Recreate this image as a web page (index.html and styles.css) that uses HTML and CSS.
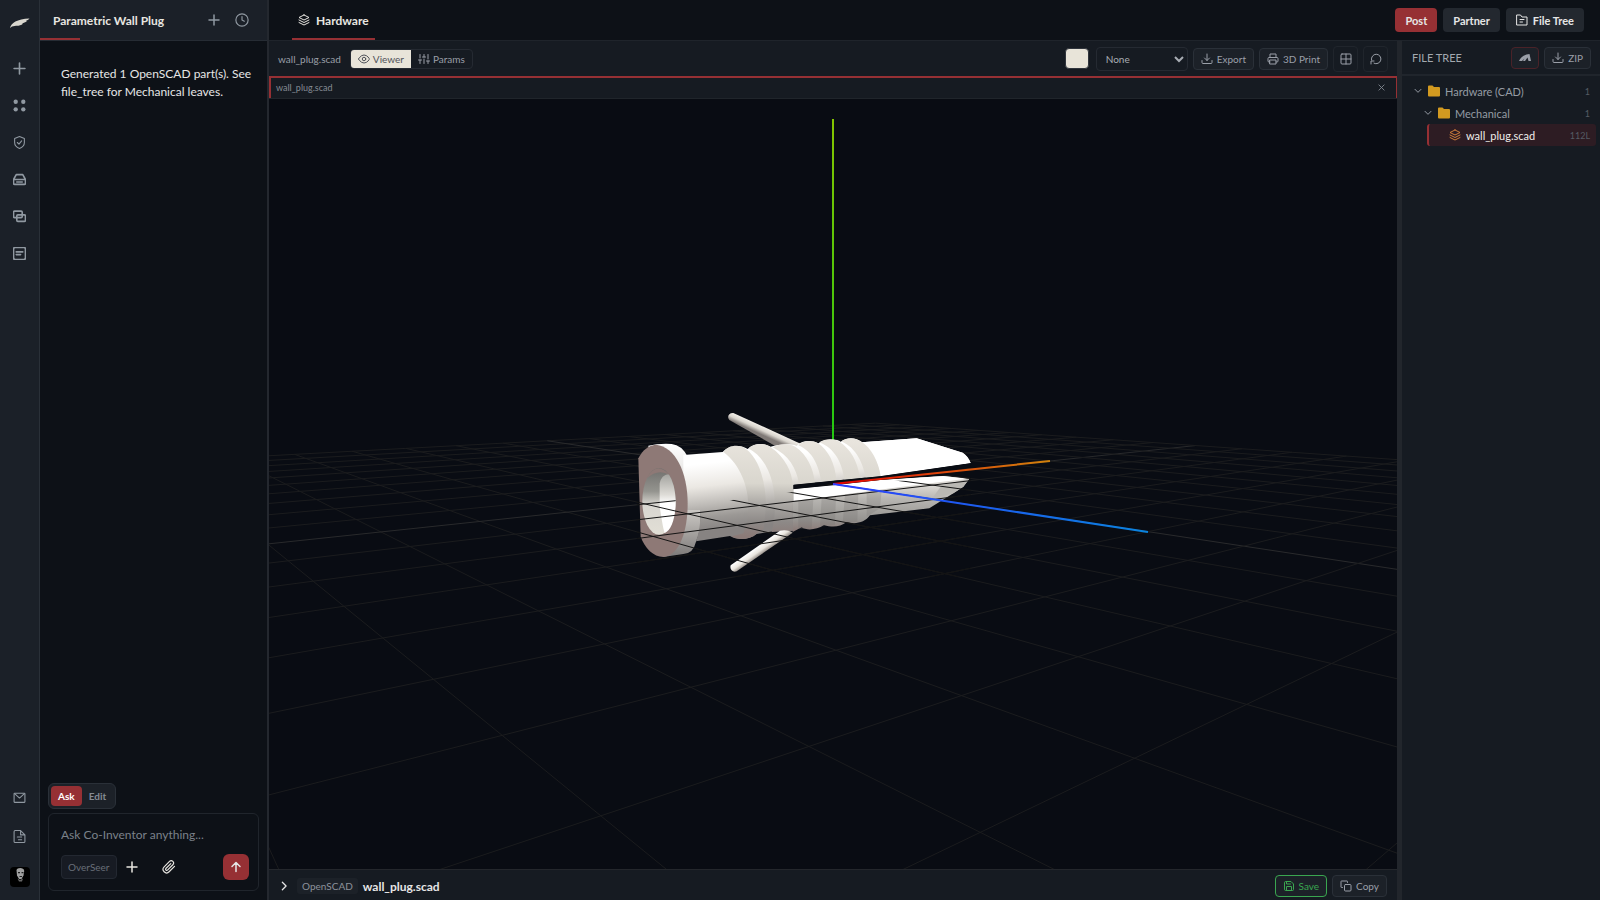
FILE: index.html
```html
<!DOCTYPE html>
<html lang="en">
<head>
    <meta charset="UTF-8">
    <meta name="viewport" content="width=device-width, initial-scale=1.0">
    <title>Parametric Wall Plug</title>
    <link rel="stylesheet" href="styles.css">
</head>
<body>
    <svg class="defs" width="0" height="0" aria-hidden="true">
        <symbol id="i-plus" viewBox="0 0 24 24"><path d="M12 2v20M2 12h20"/></symbol>
        <symbol id="i-layers" viewBox="0 0 24 24"><path d="M12 2 2 7l10 5 10-5-10-5z"/><path d="m2 12 10 5 10-5"/><path d="m2 17 10 5 10-5"/></symbol>
        <symbol id="i-download" viewBox="0 0 24 24"><path d="M22 15v4a2 2 0 0 1-2 2H4a2 2 0 0 1-2-2v-4M7 10l5 5 5-5M12 15V2"/></symbol>
        <symbol id="i-chevron" viewBox="0 0 24 24"><path d="m3 7 9 9 9-9"/></symbol>
        <symbol id="i-folder" viewBox="0 0 24 24"><path fill="currentColor" stroke="none" d="M2 1h7l3 3h10a2 2 0 0 1 2 2v15a2 2 0 0 1-2 2H2a2 2 0 0 1-2-2V3a2 2 0 0 1 2-2z"/></symbol>
    </svg>

    <div class="app">
        <nav class="rail" aria-label="Main">
            <a href="#" class="logo" aria-label="Home">
                <svg viewBox="0 0 20 10"><path d="M0 10C1 5 7 1 19.500 0.500C18.500 1.800 17.500 2.300 16 2.700L17 3C15 4.500 14 5 12 5.300L13 5.800C11 7.300 8.500 8 6 7.800L2 8.500z"/></svg>
            </a>
            <button class="rail-btn" aria-label="New"><svg class="icon"><use href="#i-plus"/></svg></button>
            <button class="rail-btn" aria-label="Apps"><svg class="icon" viewBox="0 0 24 24"><g fill="currentColor" stroke="none"><circle cx="5" cy="5" r="4"/><circle cx="19" cy="5" r="4"/><circle cx="5" cy="19" r="4"/><circle cx="19" cy="19" r="4"/></g></svg></button>
            <button class="rail-btn" aria-label="Security"><svg class="icon thin" viewBox="0 0 24 24"><path d="M12 1 3 4.500V12c0 5.500 4 9 9 11 5-2 9-5.500 9-11V4.500z"/><path d="m8 12 3 3 5-6"/></svg></button>
            <button class="rail-btn" aria-label="Storage"><svg class="icon" viewBox="0 0 24 24"><path d="M1 12 6 3h12l5 9v7a2 2 0 0 1-2 2H3a2 2 0 0 1-2-2zM1 12h22M7 16.500h10"/></svg></button>
            <button class="rail-btn" aria-label="Chats"><svg class="icon" viewBox="0 0 24 24"><rect x="1" y="2" width="16" height="12" rx="2"/><rect x="7" y="9" width="16" height="12" rx="2"/></svg></button>
            <button class="rail-btn" aria-label="Notes"><svg class="icon" viewBox="0 0 24 24"><rect x="1" y="1" width="22" height="22" rx="3"/><path d="M6 9h12M6 14h8"/></svg></button>
            <div class="spacer"></div>
            <div class="rail-bottom">
                <button class="rail-btn" aria-label="Mail"><svg class="icon thin" viewBox="0 0 24 24"><rect x="2" y="4" width="20" height="17" rx="1"/><path d="m3 5 9 8 9-8"/></svg></button>
                <button class="rail-btn" aria-label="Docs"><svg class="icon thin" viewBox="0 0 24 24"><path d="M14 1H4a2 2 0 0 0-2 2v18a2 2 0 0 0 2 2h16a2 2 0 0 0 2-2V9zM14 1v8h8M8 13h8M10 18h6"/></svg></button>
            </div>
            <button class="avatar" aria-label="Account">
                <svg viewBox="0 0 20 20"><path fill="#a0a0a0" d="M6.500 3C7 .5 14 0 14.200 4L13.500 8.500 11.500 12H9L7 8.500z"/><path fill="#222" d="M8 5h2v1.300H8zM11.500 5h2v1.300h-2zM9.500 9h2.500v1H9.500z"/><path fill="#666" d="m7.500 11.500 2.500 1.500 3-1.500-1 3H9z"/></svg>
            </button>
        </nav>

        <aside class="chat">
            <header class="chat-head">
                <h1 class="chat-title">Parametric Wall Plug</h1>
                <button class="ghost" aria-label="New chat"><svg class="icon small"><use href="#i-plus"/></svg></button>
                <button class="ghost" aria-label="History"><svg class="icon" viewBox="0 0 24 24"><circle cx="12" cy="12" r="10.500"/><path d="M12 6v6l4 2"/></svg></button>
            </header>
            <div class="messages">
                <p>Generated 1 OpenSCAD part(s). See file_tree for Mechanical leaves.</p>
            </div>
            <div class="composer-area">
                <div class="mode">
                    <button class="mode-btn active">Ask</button>
                    <button class="mode-btn">Edit</button>
                </div>
                <form class="composer">
                    <input type="text" aria-label="Message" placeholder="Ask Co-Inventor anything...">
                    <div class="composer-row">
                        <button type="button" class="overseer">OverSeer</button>
                        <button type="button" class="tool" aria-label="Add"><svg class="icon small"><use href="#i-plus"/></svg></button>
                        <button type="button" class="tool" aria-label="Attach"><svg class="icon thin" viewBox="0 0 24 24"><path d="m21.400 11-9.200 9.200a6 6 0 0 1-8.500-8.500l9.200-9.200a4 4 0 0 1 5.700 5.700l-9.200 9.200a2 2 0 0 1-2.800-2.800l8.500-8.500"/></svg></button>
                        <button type="button" class="send" aria-label="Send"><svg class="icon small" viewBox="0 0 24 24"><path d="M12 21V4M4 11l8-8 8 8"/></svg></button>
                    </div>
                </form>
            </div>
        </aside>

        <div class="main">
            <header class="topbar">
                <a href="#" class="tab"><svg class="icon small thin"><use href="#i-layers"/></svg>Hardware</a>
                <div class="spacer"></div>
                <button class="top-btn primary">Post</button>
                <button class="top-btn">Partner</button>
                <button class="top-btn"><svg class="icon small thin" viewBox="0 0 24 24"><path d="M2 2h7l3 4h10v16H2zM8 11h8M8 16h5"/></svg>File Tree</button>
            </header>

            <div class="body">
                <main class="workspace">
                    <div class="toolbar">
                        <span class="file">wall_plug.scad</span>
                        <div class="switch">
                            <button class="switch-btn on"><svg class="icon small" viewBox="0 0 24 24"><path d="M1 12s4-8 11-8 11 8 11 8-4 8-11 8S1 12 1 12z"/><circle cx="12" cy="12" r="3.500"/></svg>Viewer</button>
                            <button class="switch-btn"><svg class="icon small" viewBox="0 0 24 24"><path d="M4 21v-7M4 10V3M12 21v-9M12 8V3M20 21v-5M20 12V3M1 14h6M9 8h6M17 16h6"/></svg>Params</button>
                        </div>
                        <div class="spacer"></div>
                        <button class="swatch" aria-label="Model colour"></button>
                        <select class="material" aria-label="Material">
                            <option>None</option>
                        </select>
                        <button class="btn"><svg class="icon"><use href="#i-download"/></svg>Export</button>
                        <button class="btn"><svg class="icon" viewBox="0 0 24 24"><path d="M6 9V2h12v7M6 18H4a2 2 0 0 1-2-2v-5a2 2 0 0 1 2-2h16a2 2 0 0 1 2 2v5a2 2 0 0 1-2 2h-2"/><rect x="6" y="14" width="12" height="8"/></svg>3D Print</button>
                        <button class="sq" aria-label="Grid"><svg class="icon" viewBox="0 0 24 24"><rect x="2" y="2" width="20" height="20" rx="2"/><path d="M12 2v20M2 12h20"/></svg></button>
                        <button class="sq" aria-label="Reset view"><svg class="icon" viewBox="0 0 24 24"><path d="M3 14a9.500 9.500 0 1 1 5 6.500M2 22v-6h6"/></svg></button>
                    </div>
                    <div class="pane-head">
                        <span>wall_plug.scad</span>
                        <button class="close" aria-label="Close"><svg class="icon" viewBox="0 0 24 24"><path d="m3 3 18 18M21 3 3 21"/></svg></button>
                    </div>
                    <div class="viewport">
                        <svg class="scene" viewBox="-564 -385 1128 770" preserveAspectRatio="xMidYMid slice" role="img" aria-label="Wall plug model">
                            <defs>
                                <linearGradient id="ax" gradientUnits="userSpaceOnUse" x1="0" y1="0" x2="217" y2="0"><stop stop-color="#e60000"/><stop offset=".4" stop-color="#e03a0a"/><stop offset="1" stop-color="#d0820c"/></linearGradient>
                                <linearGradient id="ay" gradientUnits="userSpaceOnUse" x1="0" y1="0" x2="0" y2="-365"><stop stop-color="#14c814"/><stop offset="1" stop-color="#84c400"/></linearGradient>
                                <linearGradient id="az" gradientUnits="userSpaceOnUse" x1="0" y1="0" x2="315" y2="0"><stop stop-color="#2b3cff"/><stop offset="1" stop-color="#0a84de"/></linearGradient>
                                <linearGradient id="shade" gradientUnits="userSpaceOnUse" x1="0" y1="150" x2="30" y2="420"><stop stop-color="#fff"/><stop offset=".25" stop-color="#fff"/><stop offset=".5" stop-color="#ebe8e3"/><stop offset=".7" stop-color="#bfbcb8"/><stop offset=".85" stop-color="#9b9895"/><stop offset="1" stop-color="#878382"/></linearGradient>
                                <linearGradient id="rib" gradientUnits="userSpaceOnUse" x1="0" y1="120" x2="0" y2="410"><stop stop-color="#e9e5de"/><stop offset=".45" stop-color="#d9d6ce"/><stop offset=".65" stop-color="#aeaba7"/><stop offset=".85" stop-color="#8d8987"/><stop offset="1" stop-color="#8b7a77"/></linearGradient>
                                <linearGradient id="lower" gradientUnits="userSpaceOnUse" x1="0" y1="255" x2="0" y2="392"><stop stop-color="#dddad5"/><stop offset=".3" stop-color="#b8b6b2"/><stop offset=".75" stop-color="#979592"/><stop offset="1" stop-color="#8b7b78"/></linearGradient>
                                <linearGradient id="side" gradientUnits="userSpaceOnUse" x1="0" y1="132" x2="0" y2="470"><stop stop-color="#fff"/><stop offset=".6" stop-color="#c9c6c2"/><stop offset="1" stop-color="#7d7a79"/></linearGradient>
                                <linearGradient id="bore" x1="0" y1="0" x2="0" y2="1"><stop stop-color="#6f6e6c"/><stop offset=".35" stop-color="#94948f"/><stop offset=".55" stop-color="#d8d6d0"/><stop offset="1" stop-color="#e2dfd6"/></linearGradient>
                                <linearGradient id="bore-right" x1="0" y1="0" x2="0" y2="1"><stop stop-color="#a3a39f"/><stop offset=".35" stop-color="#dedcd7"/><stop offset=".5" stop-color="#fff"/><stop offset="1" stop-color="#fff"/></linearGradient>
                                <linearGradient id="wing-top" gradientUnits="userSpaceOnUse" x1="435" y1="82" x2="425" y2="104"><stop stop-color="#f3f0ea"/><stop offset=".5" stop-color="#d9d5ce"/><stop offset="1" stop-color="#807a77"/></linearGradient>
                                <linearGradient id="wing-low" gradientUnits="userSpaceOnUse" x1="412" y1="440" x2="426" y2="460"><stop stop-color="#fff"/><stop offset=".6" stop-color="#e9e5de"/><stop offset="1" stop-color="#a39c96"/></linearGradient>
                                <clipPath id="front"><path transform="translate(-213 -84) scale(.33333)" d="M50 303 167 294V330L205 338 340 299 520 276 690 236 760 246 1052 232V530H50z"/></clipPath>
                            </defs>
                            <g id="grid"></g>
                            <rect x="-1" y="-365" width="2" height="365" fill="url(#ay)"/>
                            <g transform="translate(-213 -84) scale(.33333)">
                                <path fill="url(#wing-top)" d="M340 39 548 134 560 150 470 140 328 60C320 50 326 38 340 39z"/>
                                <!-- flange side -->
                                <path fill="url(#side)" d="M85 137Q115 130 155 132 185 135 203 170L238 300Q250 380 228 425 220 460 190 462L130 471z"/>
                                <!-- upper half -->
                                <path fill="url(#shade)" d="M190 165 308 156C325 136 360 132 383 147 400 130 430 128 452 140 475 132 510 130 530 137 548 120 575 120 595 130 610 117 650 115 662 125 680 112 705 110 725 127L890 115 1028 158Q1044 168 1052 189L780 229 640 242 520 255V392L470 392 410 402C390 420 350 422 330 408L228 424Q244 380 240 330H190z"/>
                                <path fill="#fff" d="M725 127 890 115 1028 158Q1044 168 1052 189L780 229Q775 170 725 127z"/>
                                <!-- lower half -->
                                <path fill="url(#lower)" d="M518 268 780 240 970 228 1048 236 1030 260 1000 280 928 325 750 346C735 368 705 374 680 366 660 380 640 384 612 375 590 390 560 392 545 382L518 396z"/>
                                <path fill="#fff" d="M521 268 780 240 970 228 1040 236 835 262 600 293 521 302z"/>
                                <path fill="#bab8b3" d="M1048 236 965 256 935 298 1000 280 1030 260z"/>
                                <g fill="url(#rib)">
                                    <path d="M310 156C325 134 360 132 378 147 415 175 435 235 438 310L432 385 408 402C390 420 352 422 335 409L370 400C400 330 388 215 310 156z"/>
                                    <path d="M385 145C405 128 435 128 452 142 495 170 518 220 518 255V392L455 396C475 320 470 190 385 145z"/>
                                    <path d="M458 142C480 130 505 130 526 140 562 165 580 205 585 248L537 252C530 205 505 165 458 142z"/>
                                    <path d="M535 136C550 120 575 120 594 130 625 150 645 190 649 240L604 246C597 200 580 155 535 136z"/>
                                    <path d="M598 127C615 116 640 115 658 125 690 145 715 185 719 234L673 239C667 190 645 145 598 127z"/>
                                    <path d="M664 124C680 112 705 112 723 124 755 145 775 185 782 228L737 233C729 190 710 145 664 124z"/>
                                </g>
                                <g fill="#6f6c6a" opacity=".22">
                                    <path d="M535 302 580 296 575 386 535 388z"/>
                                    <path d="M605 293 648 287 645 374 600 380z"/>
                                    <path d="M675 283 715 278 712 365 668 370z"/>
                                    <path d="M740 275 785 270 780 325 740 350z"/>
                                </g>
                                <path fill="#090c13" d="M521 254 640 242 780 229 1052 190 1052 200 970 226 780 240 640 256 521 267z"/>
                                <path fill="url(#wing-low)" d="M480 392C495 388 512 392 518 398L350 514C338 519 328 508 332 496z"/>
                                <!-- flange face -->
                                <path fill="#8e7976" d="M55 175C68 150 85 136 108 134 165 140 203 215 203 310 203 400 175 468 130 471 100 470 75 445 62 410z"/>
                                <ellipse fill="url(#bore)" cx="117" cy="304" rx="50" ry="100"/>
                                <path fill="url(#bore-right)" d="M119 320V250Q124 225 146 222 165 250 167 304C167 350 155 392 134 399 128 380 124 350 119 320z"/>
                                <path fill="#8e7976" d="M80 235Q110 180 148 225 115 205 80 235z"/>
                            </g>
                            <g id="grid-front" clip-path="url(#front)"></g>
                            <path class="axis" stroke="url(#ax)" d="M0 0 217-23"/>
                            <path class="axis" stroke="url(#az)" d="M0 0 315 48"/>
                        </svg>
                    </div>
                    <footer class="codebar">
                        <button class="expand" aria-label="Expand"><svg class="icon" viewBox="0 0 24 24"><path d="m8 3 9 9-9 9"/></svg></button>
                        <span class="lang">OpenSCAD</span>
                        <strong class="name">wall_plug.scad</strong>
                        <div class="spacer"></div>
                        <button class="btn save"><svg class="icon" viewBox="0 0 24 24"><path d="M3 5a2 2 0 0 1 2-2h11l5 5v11a2 2 0 0 1-2 2H5a2 2 0 0 1-2-2zM7 3v5h8M7 21v-8h10v8"/></svg>Save</button>
                        <button class="btn"><svg class="icon" viewBox="0 0 24 24"><rect x="9" y="9" width="13" height="13" rx="2"/><path d="M5 15H3a1 1 0 0 1-1-1V3a1 1 0 0 1 1-1h11a1 1 0 0 1 1 1v2"/></svg>Copy</button>
                    </footer>
                </main>

                <aside class="files">
                    <header class="files-head">
                        <h2>FILE TREE</h2>
                        <button class="btn brand" aria-label="Sync"><svg class="icon" viewBox="0 0 24 24"><path fill="currentColor" stroke="none" d="M0 18C3 10 10 5 21 4l3 14h-5l-2-7-5 7H8l3-5-5 5z"/></svg></button>
                        <button class="btn"><svg class="icon"><use href="#i-download"/></svg>ZIP</button>
                    </header>
                    <ul class="tree">
                        <li class="node"><svg class="icon chev"><use href="#i-chevron"/></svg><svg class="icon folder"><use href="#i-folder"/></svg><span>Hardware (CAD)</span><small>1</small></li>
                        <li class="node level-1"><svg class="icon chev"><use href="#i-chevron"/></svg><svg class="icon folder"><use href="#i-folder"/></svg><span>Mechanical</span><small>1</small></li>
                        <li class="node leaf"><svg class="icon scad"><use href="#i-layers"/></svg><span>wall_plug.scad</span><small>112L</small></li>
                    </ul>
                </aside>
            </div>
        </div>
    </div>
    <script src="grid.js"></script>
</body>
</html>
```
FILE: styles.css
```css
* {
    box-sizing: border-box;
}
body {
    margin: 0;
    background: #0d1117;
    color: #e6e6e6;
    font-family: Lato, "Noto Sans", sans-serif;
    font-size: 12px;
}
button, input, select {
    font: inherit;
    color: inherit;
    background: none;
    border: 0;
    padding: 0;
}
button {
    display: flex;
    align-items: center;
    justify-content: center;
    cursor: pointer;
}
h1, h2, p, ul {
    margin: 0;
    padding: 0;
}
.defs {
    position: absolute;
}
.icon {
    width: 14px;
    height: 14px;
    flex: none;
    fill: none;
    stroke: currentColor;
    stroke-width: 3;
    stroke-linecap: round;
    stroke-linejoin: round;
}
.icon.small {
    width: 12px;
    height: 12px;
}
.icon.thin, .switch .icon, .btn .icon, .sq .icon {
    stroke-width: 2;
}
.spacer {
    flex: 1;
}
.app {
    display: flex;
    height: 100vh;
    overflow: hidden;
}

/* left rail */
.rail {
    width: 40px;
    flex: none;
    display: flex;
    flex-direction: column;
    align-items: center;
    padding: 12px 0 13px;
    background: #1b2028;
    border-right: 1px solid #2a3038;
    color: #9098a1;
}
.rail .icon {
    width: 13px;
    height: 13px;
}
.logo {
    height: 22px;
    margin-bottom: 16px;
    display: flex;
    align-items: center;
}
.logo svg {
    width: 20px;
    height: 10px;
    fill: #d9d6ce;
}
.rail-btn {
    width: 36px;
    height: 37px;
}
.rail-bottom {
    display: flex;
    flex-direction: column;
    gap: 2px;
}
.avatar {
    width: 20px;
    height: 20px;
    margin-top: 12px;
    background: #000;
    border-radius: 4px;
    overflow: hidden;
}

/* chat */
.chat {
    width: 229px;
    flex: none;
    display: flex;
    flex-direction: column;
    border-right: 2px solid #24282f;
}
.chat-head {
    position: relative;
    display: flex;
    align-items: center;
    gap: 15px;
    height: 41px;
    padding: 0 18px 0 13px;
    background: #1b2028;
    border-bottom: 1px solid #262c34;
    color: #9098a1;
}
.chat-head::after {
    content: "";
    position: absolute;
    left: 0;
    bottom: 0;
    width: 40px;
    height: 2px;
    background: #963034;
}
.chat-head .icon {
    stroke-width: 2;
}
.chat-head .small {
    stroke-width: 3;
}
.chat-title {
    flex: 1;
    font-size: 12px;
    font-weight: 700;
    color: #e8e6e1;
    white-space: nowrap;
}
.messages {
    flex: 1;
    padding: 24px 12px 24px 21px;
    line-height: 18px;
}
.composer-area {
    display: flex;
    flex-direction: column;
    align-items: stretch;
    gap: 4px;
    padding: 0 8px 9px;
}
.mode {
    align-self: flex-start;
    display: flex;
    padding: 2px;
    background: #1c2128;
    border: 1px solid #2a3038;
    border-radius: 6px;
}
.mode-btn {
    height: 20px;
    padding: 0 7px;
    border-radius: 4px;
    font-size: 10px;
    font-weight: 700;
    color: #858b94;
}
.mode-btn.active {
    background: #963034;
    color: #fff;
}
.composer {
    padding: 10px 9px 10px 12px;
    border: 1px solid #20252c;
    border-radius: 6px;
}
.composer input {
    width: 100%;
    height: 20px;
    display: block;
}
.composer input::placeholder {
    color: #7b818a;
}
.composer-row {
    display: flex;
    align-items: center;
    margin-top: 10px;
}
.overseer {
    height: 24px;
    padding: 0 6px;
    margin-right: 7px;
    background: #171b23;
    border: 1px solid #232831;
    border-radius: 4px;
    font-size: 10px;
    color: #686e78;
}
.tool {
    width: 16px;
    margin-right: 21px;
    color: #e8e6e1;
}
.send {
    width: 26px;
    height: 26px;
    margin-left: auto;
    background: #963034;
    border-radius: 6px;
}

/* top bar */
.main {
    flex: 1;
    min-width: 0;
    display: flex;
    flex-direction: column;
}
.topbar {
    display: flex;
    align-items: center;
    gap: 6px;
    height: 41px;
    padding: 0 16px 0 23px;
    border-bottom: 1px solid #1f242b;
}
.tab {
    display: flex;
    align-items: center;
    gap: 6px;
    height: 40px;
    padding: 2px 6px 0;
    color: #e8e6e1;
    font-weight: 700;
    text-decoration: none;
    border-bottom: 2px solid #963034;
}
.top-btn {
    gap: 5px;
    height: 24px;
    padding: 0 10px;
    background: #23282f;
    border-radius: 4px;
    font-size: 11px;
    font-weight: 700;
}
.top-btn.primary {
    background: #963034;
}
.body {
    flex: 1;
    min-height: 0;
    display: flex;
}

/* workspace */
.workspace {
    flex: 1;
    min-width: 0;
    display: flex;
    flex-direction: column;
}
.toolbar {
    display: flex;
    align-items: center;
    gap: 5px;
    height: 35px;
    padding: 0 9px;
    background: #161b22;
    color: #9a9fa8;
    font-size: 10px;
}
.file {
    font-size: 10px;
    margin-right: 4px;
}
.switch {
    display: flex;
    border: 1px solid #252a32;
    border-radius: 4px;
    overflow: hidden;
}
.switch-btn {
    gap: 3px;
    height: 18px;
    padding: 0 7px;
}
.switch-btn.on {
    background: #e8e4d9;
    color: #50535a;
}
.swatch {
    width: 24px;
    height: 21px;
    margin-right: 2px;
    background: #e8e4d9;
    border: 1px solid #30353d;
    border-radius: 4px;
}
.material {
    width: 92px;
    height: 24px;
    padding: 0 5px;
    border: 1px solid #252a32;
    border-radius: 4px;
    background: #161b22;
    color: #a8adb4;
}
.btn {
    gap: 4px;
    height: 22px;
    padding: 0 7px;
    background: #1c2128;
    border: 1px solid #2a3038;
    border-radius: 4px;
    color: #9a9fa8;
    font-size: 10px;
}
.btn .icon, .sq .icon {
    width: 12px;
    height: 12px;
}
.sq {
    width: 25px;
    height: 26px;
    border: 1px solid #20252c;
    border-radius: 4px;
}
.pane-head {
    display: flex;
    align-items: center;
    justify-content: space-between;
    height: 22px;
    padding: 0 11px 2px 5px;
    background: #161b22;
    border: 2px solid #963034;
    border-width: 2px 1px 0 2px;
    color: #858b94;
    font-size: 9px;
}
.close .icon {
    width: 7px;
    height: 7px;
}
.viewport {
    flex: 1;
    min-height: 0;
    background: #090c13;
    border-top: 1px solid #20252b;
}
.scene {
    display: block;
    width: 100%;
    height: 100%;
}
.axis {
    fill: none;
    stroke-width: 2;
}
.grid-line {
    stroke: #1b1c1e;
    stroke-width: 1;
}
.grid-line.center {
    stroke: #292a2c;
}
#grid-front .grid-line {
    stroke: #141414;
}
.codebar {
    display: flex;
    align-items: center;
    gap: 5px;
    height: 31px;
    padding: 2px 10px 0;
    background: #161b22;
    border-top: 1px solid #24272c;
}
.expand .icon {
    width: 10px;
    height: 10px;
}
.lang {
    margin-left: 3px;
    padding: 2px 5px;
    background: #1c2128;
    border-radius: 3px;
    color: #8c929b;
    font-size: 10px;
}
.name {
    font-size: 12px;
    font-weight: 700;
}
.save {
    border-color: #3aa650;
    color: #3aa650;
}

/* file tree */
.files {
    width: 203px;
    flex: none;
    background: #161b22;
    border-left: 5px solid #22262c;
}
.files-head {
    display: flex;
    align-items: center;
    gap: 5px;
    height: 35px;
    padding: 0 9px 0 10px;
    border-bottom: 2px solid #20252c;
}
.files-head h2 {
    flex: 1;
    font-size: 11px;
    font-weight: 400;
    color: #a3a8af;
}
.brand {
    border-color: #4a2228;
}
.tree {
    padding: 4px 4px 0 8px;
    list-style: none;
    font-size: 11px;
    color: #959ba4;
}
.node {
    display: flex;
    align-items: center;
    height: 22px;
    padding-right: 6px;
}
.node span {
    flex: 1;
    margin-left: 5px;
}
.node small {
    font-size: 9px;
    color: #555b64;
}
.chev {
    width: 8px;
    height: 8px;
    margin: 0 6px 0 4px;
}
.folder {
    width: 12px;
    height: 12px;
    color: #d39a20;
}
.level-1 {
    margin-left: 10px;
}
.leaf {
    margin-left: 17px;
    padding-left: 20px;
    background: #2d1c23;
    border-left: 2px solid #963034;
    border-radius: 3px;
    color: #f0eeea;
}
.scad {
    width: 12px;
    height: 12px;
    stroke-width: 2;
    color: #cf7f3c;
}
```
FILE: grid.js
```js
// Ground grid, 20 x 20 cells, seen from a 45 degree camera looking at the origin
const FOCAL = 929.5;
const DIST = 13.28;
const YAW = 0.697;
const PITCH = 0.127;
const HALF = 10;
const NEAR = 0.5;

const s = Math.sin(YAW), c = Math.cos(YAW);
const sp = Math.sin(PITCH), cp = Math.cos(PITCH);

function toCamera(x, z) {
    return {
        r: x * c + z * s,
        u: (x * s - z * c) * sp,
        d: DIST + (x * s - z * c) * cp
    };
}

function clip(a, b) {
    const t = (NEAR - a.d) / (b.d - a.d);
    return { r: a.r + (b.r - a.r) * t, u: a.u + (b.u - a.u) * t, d: NEAR };
}

function addLine(parent, x1, z1, x2, z2, center) {
    let a = toCamera(x1, z1), b = toCamera(x2, z2);
    if (a.d < NEAR && b.d < NEAR) return;
    if (a.d < NEAR) a = clip(a, b);
    if (b.d < NEAR) b = clip(b, a);
    const line = document.createElementNS('http://www.w3.org/2000/svg', 'line');
    line.setAttribute('x1', FOCAL * a.r / a.d);
    line.setAttribute('y1', -FOCAL * a.u / a.d);
    line.setAttribute('x2', FOCAL * b.r / b.d);
    line.setAttribute('y2', -FOCAL * b.u / b.d);
    line.setAttribute('class', center ? 'grid-line center' : 'grid-line');
    parent.appendChild(line);
}

function drawGrid(id) {
    const g = document.getElementById(id);
    for (let i = -HALF; i <= HALF; i++) {
        addLine(g, -HALF, i, HALF, i, i === 0);
        addLine(g, i, -HALF, i, HALF, i === 0);
    }
}

drawGrid('grid');
drawGrid('grid-front');
```
